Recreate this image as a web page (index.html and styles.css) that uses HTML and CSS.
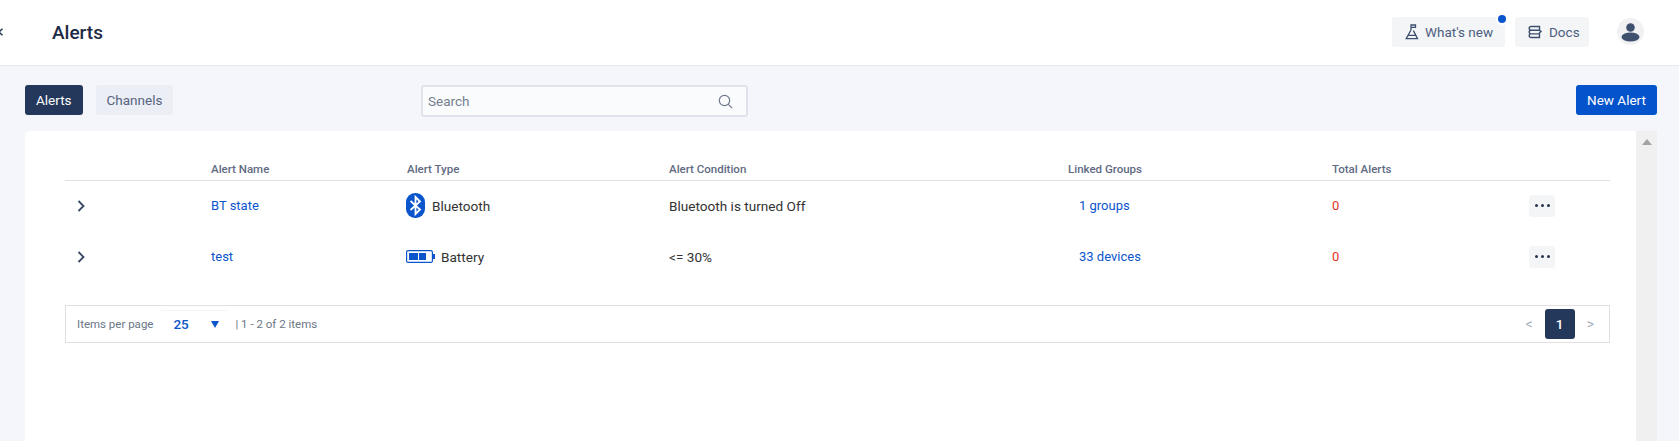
FILE: index.html
```html
<!DOCTYPE html>
<html lang="en">
<head>
<meta charset="utf-8">
<title>Alerts</title>
<link rel="stylesheet" href="styles.css">
</head>
<body>
<header class="topbar">
  <svg class="collapse" width="4" height="8" viewBox="0 0 4 8"><path d="M3.500 .8 0 4l3.500 3.200" fill="none" stroke="#26334f" stroke-width="1.500"/></svg>
  <h1 class="title">Alerts</h1>
  <div class="top-actions">
    <a class="top-btn news">
      <svg width="14" height="16" viewBox="0 0 14 16" fill="none" stroke="#3d4f6f" stroke-width="1.300"><path d="M6 6V1h4.500v2.400H6M6 6 1.200 14.600h11.300L8.400 6.600M3.200 11.300h7.400"/></svg>
      <span>What's new</span>
      <i class="dot"></i>
    </a>
    <a class="top-btn docs">
      <svg width="14" height="14" viewBox="0 0 14 14" fill="none" stroke="#3d4f6f" stroke-width="1.400"><path d="M3 1.500h8.500v3.700H3a1.850 1.850 0 0 1 0-3.700ZM3 5.200h8.500l1.500 1.200-1.500 1.400V8.900H3a1.850 1.850 0 0 1 0-3.700ZM3 8.900h8.500v3.600H3a1.800 1.800 0 0 1 0-3.600Z"/></svg>
      <span>Docs</span>
    </a>
    <span class="avatar">
      <svg width="27" height="27" viewBox="0 0 27 27"><circle cx="13.500" cy="13.500" r="13.500" fill="#f1f1f3"/><circle cx="13.500" cy="9.500" r="4.300" fill="#3f506f"/><ellipse cx="13.500" cy="19" rx="9" ry="4.500" fill="#3f506f"/></svg>
    </span>
  </div>
</header>

<main class="content">
  <div class="toolbar">
    <div class="tabs">
      <a class="tab active">Alerts</a>
      <a class="tab">Channels</a>
    </div>
    <label class="search">
      <span class="search-text">Search</span>
      <svg width="15" height="15" viewBox="0 0 15 15" fill="none" stroke="#6f7a8a" stroke-width="1.200"><circle cx="6.500" cy="6.500" r="5.200"/><path d="m10.300 10.300 3.800 3.800"/></svg>
    </label>
    <a class="new-alert">New Alert</a>
  </div>

  <section class="card">
    <div class="panel">
      <div class="row head">
        <span></span>
        <span>Alert Name</span>
        <span>Alert Type</span>
        <span>Alert Condition</span>
        <span>Linked Groups</span>
        <span>Total Alerts</span>
        <span></span>
      </div>
      <div class="row item">
        <svg class="chev" width="10" height="14" viewBox="0 0 10 14" fill="none" stroke="#3a4862" stroke-width="1.800"><path d="m2.500 2 5 5-5 5"/></svg>
        <a class="link">BT state</a>
        <span class="type bt">
          <svg width="19" height="25" viewBox="0 0 19 25"><rect width="19" height="25" rx="9" fill="#0b55cc"/><path d="M4.500 8 14 16.500 9.500 21V4L14 8.500 4.500 17" fill="none" stroke="#fff" stroke-width="1.800"/></svg>
          <span class="text">Bluetooth</span>
        </span>
        <span class="text">Bluetooth is turned Off</span>
        <a class="link linked">1 groups</a>
        <span class="count">0</span>
        <a class="more"><i></i><i></i><i></i></a>
      </div>
      <div class="row item">
        <svg class="chev" width="10" height="14" viewBox="0 0 10 14" fill="none" stroke="#3a4862" stroke-width="1.800"><path d="m2.500 2 5 5-5 5"/></svg>
        <a class="link">test</a>
        <span class="type bat">
          <svg width="29" height="13" viewBox="0 0 29 13"><rect x=".6" y=".6" width="25.800" height="11.800" rx="1.500" fill="none" stroke="#0b55cc" stroke-width="1.200"/><rect x="3" y="3" width="9" height="7" fill="#0b55cc"/><rect x="13" y="3" width="7" height="7" fill="#0b55cc"/><rect x="27" y="4" width="2" height="5" fill="#0b55cc"/></svg>
          <span class="text">Battery</span>
        </span>
        <span class="text">&lt;= 30%</span>
        <a class="link linked">33 devices</a>
        <span class="count">0</span>
        <a class="more"><i></i><i></i><i></i></a>
      </div>
      <div class="pager">
        <span class="pager-label">Items per page</span>
        <span class="size"><b>25</b><svg width="8" height="7" viewBox="0 0 8 7"><path d="M0 0h8L4 7Z" fill="#0b55cc"/></svg></span>
        <span class="pager-label">| 1 - 2 of 2 items</span>
        <span class="pages">
          <span class="arrow">&lt;</span>
          <span class="page">1</span>
          <span class="arrow">&gt;</span>
        </span>
      </div>
    </div>
    <div class="scrollbar"><i class="scroll-up"></i></div>
  </section>
</main>
</body>
</html>
```
FILE: styles.css
```css
* { box-sizing: border-box; }
html, body { height: 100%; }
body {
  margin: 0;
  height: 441px;
  overflow: hidden;
  background: #f4f6fb;
  font-family: "Roboto", "Liberation Sans", sans-serif;
  font-size: 13px;
  color: #333;
}
a { color: inherit; text-decoration: none; }

.topbar {
  height: 66px;
  background: #fff;
  border-bottom: 1px solid #e6e8ee;
  display: flex;
  align-items: center;
  padding: 0 35px 2px 0;
}
.collapse { display: block; margin-left: -1px; }
.title {
  margin: 1px 0 0 49px;
  font-size: 19px;
  font-weight: 500;
  color: #1e2a45;
}
.top-actions { margin-left: auto; display: flex; align-items: center; gap: 10px; }
.top-btn {
  position: relative;
  height: 30px;
  border-radius: 3px;
  background: #f4f5f7;
  display: flex;
  align-items: center;
  padding-left: 13px;
  color: #4d5f80;
  font-size: 13.500px;
}
.news { width: 113px; gap: 6px; }
.docs { width: 74px; gap: 7px; }
.dot {
  position: absolute;
  top: -2px;
  right: -1px;
  width: 8px;
  height: 8px;
  border-radius: 50%;
  background: #0b55cc;
  box-shadow: 0 0 0 2px #fff;
}
.avatar { display: block; height: 27px; margin-left: 18px; }
.avatar svg { display: block; }

.content { padding: 19px 22px 0 25px; }
.toolbar { display: flex; align-items: flex-start; height: 46px; }
.tabs { display: flex; gap: 13px; width: 396px; }
.tab {
  height: 30px;
  padding: 0 11px;
  border-radius: 3px;
  background: #eceef5;
  color: #55647f;
  font-size: 13.500px;
  display: flex;
  align-items: center;
}
.tab.active { background: #24385b; color: #fff; }
.search {
  width: 327px;
  height: 32px;
  border: 2px solid #dfe2ea;
  border-radius: 3px;
  background: #fafbfd;
  display: flex;
  align-items: center;
  justify-content: space-between;
  padding: 0 13px 0 5px;
  color: #767f8d;
  font-size: 13.500px;
}
.new-alert {
  margin-left: auto;
  width: 81px;
  height: 30px;
  border-radius: 3px;
  background: #0353cc;
  color: #fff;
  font-size: 13.500px;
  display: flex;
  align-items: center;
  justify-content: center;
}

.card {
  height: 310px;
  display: flex;
  background: #fff;
  border-radius: 5px 0 0 0;
}
.panel { flex: 1; padding: 28px 26px 0 40px; }
.row {
  display: grid;
  grid-template-columns: 146px 196px 262px 399px 264px 197px 1fr;
  align-items: center;
}
.head {
  height: 22px;
  margin-bottom: -1px;
  border-bottom: 1px solid #dfe1e8;
  padding-bottom: 2px;
  color: #5f6b82;
  font-size: 11.500px;
  font-weight: 500;
}
.item { height: 51px; font-size: 13px; }
.text { font-size: 13.600px; }
.chev { margin-left: 11px; display: block; }
.link { color: #0b55cc; }
.linked { padding-left: 11px; }
.count { color: #e5311d; }
.type { display: flex; align-items: center; gap: 7px; margin-left: -1px; }
.type.bat { gap: 6px; }
.more {
  width: 26px;
  height: 22px;
  border-radius: 3px;
  background: #f4f5f7;
  display: flex;
  align-items: center;
  justify-content: center;
  gap: 3px;
}
.more i { width: 3px; height: 3px; border-radius: 50%; background: #26334f; }

.pager {
  margin-top: 23px;
  height: 38px;
  border: 1px solid #e0e0e2;
  display: flex;
  align-items: center;
  padding: 0 15px 1px 11px;
  color: #6b7687;
  font-size: 11.500px;
}
.size {
  width: 66px;
  height: 28px;
  margin: 0 8px;
  padding: 0 8px 0 12px;
  display: flex;
  align-items: center;
  justify-content: space-between;
  border-top: 1px solid #f5f5f6;
  color: #0b55cc;
}
.size b { font-size: 13.500px; font-weight: 500; }
.pages { margin-left: auto; display: flex; align-items: center; gap: 12px; }
.arrow { color: #a9b0bd; font-size: 14px; }
.page {
  width: 30px;
  height: 30px;
  border-radius: 3px;
  background: #24385b;
  color: #fff;
  font-size: 13.500px;
  font-weight: 500;
  display: flex;
  align-items: center;
  justify-content: center;
}

.scrollbar { width: 21px; background: #f0f0f0; position: relative; }
.scroll-up {
  position: absolute;
  top: 8px;
  left: 6px;
  width: 0;
  height: 0;
  border-left: 5px solid transparent;
  border-right: 5px solid transparent;
  border-bottom: 6px solid #a3a3a3;
}
```
